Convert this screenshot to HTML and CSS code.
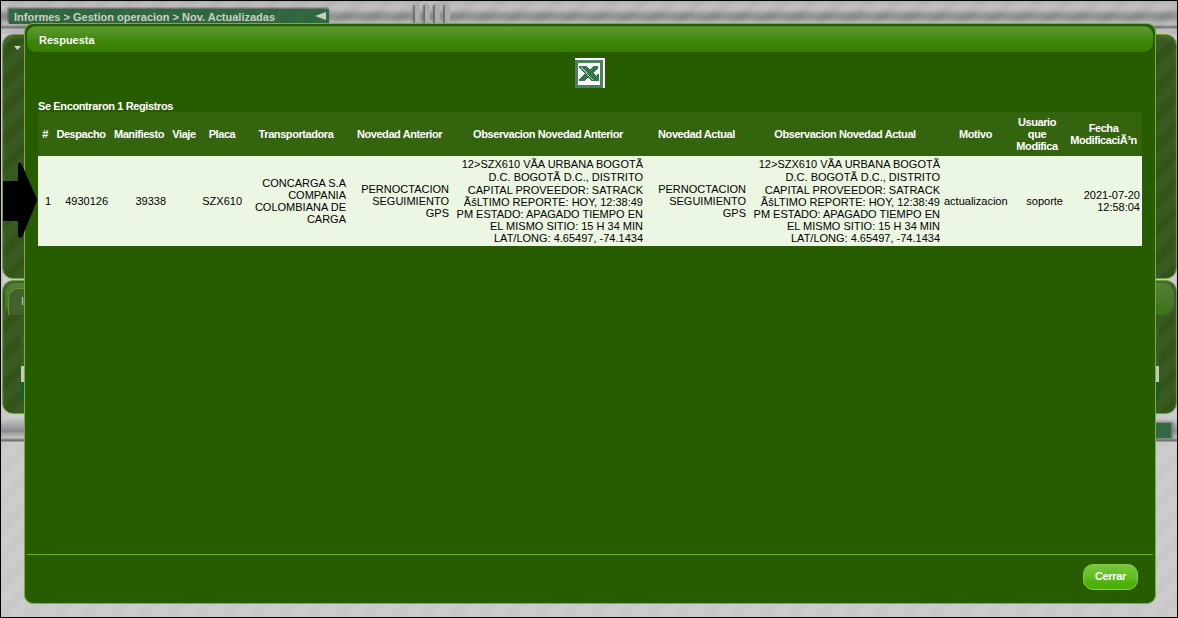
FILE: index.html
```html
<!DOCTYPE html>
<html lang="es">
<head>
<meta charset="utf-8">
<title>Nov. Actualizadas</title>
<link rel="stylesheet" href="styles.css">
</head>
<body>
<div class="page">
  <header class="topbar">
    <div class="crumbs"><span>Informes &gt; Gestion operacion &gt; Nov. Actualizadas</span>
      <svg class="back" width="11" height="8" viewBox="0 0 11 8"><path d="M0 4L11 0V8Z" fill="#c8cbc8"/></svg></div>
    <div class="pipe short"></div>
    <div class="ribs"><i></i><i></i><i></i><i></i></div>
    <div class="pipe"></div>
  </header>
  <main class="panels">
    <section class="panel filters"><svg width="7" height="4" viewBox="0 0 7 4"><path d="M0 0H7L3.500 4Z" fill="#d5d9d2"/></svg></section>
    <section class="panel results">
      <div class="tabbar"><div class="tab">I</div></div>
      <div class="rows"><div class="r1"></div><div class="r2"></div><div class="r3"></div></div>
    </section>
  </main>
  <footer class="bottombar"><div class="status"></div></footer>
</div>

<div class="dialog">
  <div class="dialog-title">Respuesta</div>
  <div class="dialog-body">
    <div class="export">
      <svg width="30" height="30" viewBox="0 0 30 30" shape-rendering="crispEdges">
        <defs><pattern id="dots" width="2" height="2" patternUnits="userSpaceOnUse"><rect width="2" height="2" fill="#2f7048"/><path d="M0 0h1v1H0zM1 1h1v1H1z" fill="#699078"/></pattern>
        <pattern id="dark" width="2" height="2" patternUnits="userSpaceOnUse"><rect width="2" height="2" fill="#226a3d"/><path d="M0 0h1v1H0zM1 1h1v1H1z" fill="#46845c"/></pattern></defs>
        <rect width="30" height="30" fill="#fff"/>
        <rect y="2" width="28" height="28" fill="url(#dots)"/>
        <rect x="3" y="5" width="22" height="22" fill="#fff"/>
        <path d="M4 8H12L15 12L18 8H23V10L18 15L21 18H22V16H24V23H16L13 19L9 23H4V21L10 15L4 10Z" fill="url(#dark)"/>
        <path d="M6 9L18 22" stroke="#e4efe7" stroke-width=".8" fill="none"/>
      </svg>
    </div>
    <div class="count">Se Encontraron 1 Registros</div>
    <table class="grid">
      <colgroup><col class="w14"><col class="w58"><col class="w58"><col class="w32"><col class="w44"><col class="w104"><col class="w103"><col class="w194"><col class="w103"><col class="w194"><col class="w67"><col class="w56"><col class="w77"></colgroup>
      <thead><tr><th>#</th><th>Despacho</th><th>Manifiesto</th><th>Viaje</th><th>Placa</th><th>Transportadora</th><th>Novedad Anterior</th><th>Observacion Novedad Anterior</th><th>Novedad Actual</th><th>Observacion Novedad Actual</th><th>Motivo</th><th>Usuario<br>que<br>Modifica</th><th>Fecha<br>ModificaciÃ³n</th></tr></thead>
      <tbody><tr>
        <td class="num">1</td><td>4930126</td><td>39338</td><td></td><td>SZX610</td>
        <td>CONCARGA S.A<br>COMPANIA<br>COLOMBIANA DE<br>CARGA</td>
        <td>PERNOCTACION<br>SEGUIMIENTO<br>GPS</td>
        <td><span class="tall">12&gt;SZX610 VÃA URBANA BOGOTÃ</span><span class="tall">D.C. BOGOTÃ D.C., DISTRITO</span><span>CAPITAL PROVEEDOR: SATRACK</span><span>ÃšLTIMO REPORTE: HOY, 12:38:49</span><span>PM ESTADO: APAGADO TIEMPO EN</span><span>EL MISMO SITIO: 15 H 34 MIN</span><span>LAT/LONG: 4.65497, -74.1434</span></td>
        <td>PERNOCTACION<br>SEGUIMIENTO<br>GPS</td>
        <td><span class="tall">12&gt;SZX610 VÃA URBANA BOGOTÃ</span><span class="tall">D.C. BOGOTÃ D.C., DISTRITO</span><span>CAPITAL PROVEEDOR: SATRACK</span><span>ÃšLTIMO REPORTE: HOY, 12:38:49</span><span>PM ESTADO: APAGADO TIEMPO EN</span><span>EL MISMO SITIO: 15 H 34 MIN</span><span>LAT/LONG: 4.65497, -74.1434</span></td>
        <td>actualizacion</td><td>soporte</td><td>2021-07-20<br>12:58:04</td>
      </tr></tbody>
    </table>
  </div>
  <div class="dialog-actions"><button class="close">Cerrar</button></div>
</div>

<svg class="pointer" width="35" height="77" viewBox="0 0 35 77"><path d="M0 19H15V2Q17-1 19 3L34 37V39L19 75Q17 77 15 74V59H0Z" fill="#000"/></svg>
</body>
</html>
```
FILE: styles.css
```css
* { box-sizing: border-box; }
body {
  margin: 0;
  font: 11px/12px "Liberation Sans", Arial, sans-serif;
}
.page {
  width: 1178px;
  height: 618px;
  border: 1px solid #000;
  display: flex;
  flex-direction: column;
  overflow: hidden;
  background: repeating-linear-gradient(135deg, #cccccc 0, #cccccc 8px, #c8c8c8 11px, #c8c8c8 17px, #cccccc 20px);
}
.topbar {
  height: 33px;
  padding: 8px 0 0 8px;
  display: flex;
  background:
    repeating-linear-gradient(135deg, rgba(255,255,255,.05) 0 8px, rgba(0,0,0,.02) 11px 17px, rgba(255,255,255,.05) 20px),
    linear-gradient(#b4b1b4 0, #bdbdbd 5px, #bbb 8px, #a0a3a3 11px, #898c8c 15px, #939696 18px, #b7b7b7 22px, #b2b2b2 24px, #707272 26px, #777 27px, #bbbbbd 28px, #bbbbbd 33px);
}
.crumbs {
  width: 320px;
  height: 15px;
  padding: 2px 3px 0 5px;
  display: flex;
  justify-content: space-between;
  background: repeating-linear-gradient(135deg, #33693f 0 8px, #306541 8px 16px);
  box-shadow: -1px -1px 2px #555;
  color: #cdd0cb;
  font-weight: bold;
}
.back { margin-top: 1px; }
.pipe { flex: 1; }
.pipe.short { flex: none; width: 86px; }
.ribs { display: flex; margin-top: -4px; gap: 5px; height: 20px; }
.ribs i { width: 5px; background: #acaeae; box-shadow: -2px 0 2px #686b6b; }
.panels { display: flex; flex-direction: column; gap: 1px; padding-left: 1px; }
.panel {
  border: 1px solid #6ea03b;
  border-radius: 11px;
  background: repeating-linear-gradient(135deg, #395a22 0, #395a22 8px, #335319 11px, #335319 17px, #395a22 20px);
  box-shadow: inset 0 3px 4px rgba(110,140,90,.35);
}
.filters { height: 245px; padding: 11px 0 0 11px; line-height: 0; }
.results { height: 134px; padding: 2px 2px 0; }
.tabbar {
  height: 32px;
  padding: 5px 0 0 3px;
  border-radius: 11px;
  background: linear-gradient(#567f36, #3c731a);
}
.tab {
  width: 300px;
  height: 27px;
  padding: 6px 0 0 12px;
  border: 1px solid #61922f;
  border-width: 1px 0 0 1px;
  border-radius: 10px 0 0;
  background: #41622a;
  color: #c9d1d8;
}
.rows { margin: 11px 15px 0 16px; }
.r1 { height: 40px; background: #3a5d27; }
.r2 { height: 16px; background: #c4c9bf; }
.r3 { height: 18px; background: #166029; }
.bottombar {
  height: 28px;
  padding: 9px 6px 0;
  display: flex;
  justify-content: flex-end;
  background: linear-gradient(transparent 4px, #c6c6c6 5px, #a8aaaa 11px, #8b8e8e 17px, #bcbcbc 23px, #bbb 24px, #747474 26px, #747474 27px, transparent 28px);
}
.status { width: 40px; height: 15px; background: #336943; box-shadow: 1px 0 2px 1px #777; }

.dialog {
  position: absolute;
  left: 24px;
  top: 23px;
  width: 1132px;
  height: 581px;
  padding: 2px;
  display: flex;
  flex-direction: column;
  border: 1px solid #72b42d;
  border-radius: 9px;
  background: #285c00;
  color: #fff;
}
.dialog-title {
  height: 26px;
  padding: 8px 12px 0;
  border-radius: 9px;
  background: linear-gradient(#357607 0, #5b992c 1px, #529225 7px, #3d8407 15px, #398004 25px, #357607 26px);
  font-weight: bold;
}
.dialog-body { flex: 1; padding: 6px 11px 0; }
.export { height: 42px; padding-left: 537px; }
.count { height: 12px; font-weight: bold; letter-spacing: -.38px; }
.grid { width: 1104px; table-layout: fixed; border-collapse: collapse; }
.grid th, .grid td { padding: 2px; white-space: nowrap; }
.grid th { height: 44px; padding: 2px 0; background: #35640f; text-align: center; vertical-align: middle; letter-spacing: -.42px; }
.grid td { height: 90px; background: #ebf7e2; color: #000; text-align: right; vertical-align: middle; }
.grid .num { padding-right: 1px; }
.grid span { display: block; }
.grid .tall { line-height: 13px; }
.w14 { width: 14px; } .w32 { width: 32px; } .w44 { width: 44px; } .w56 { width: 56px; }
.w58 { width: 58px; } .w67 { width: 67px; } .w77 { width: 77px; }
.w103 { width: 103px; } .w104 { width: 104px; } .w194 { width: 194px; }
.dialog-actions {
  height: 47px;
  padding: 9px 15px 0;
  border-top: 1px solid #69b022;
  display: flex;
  justify-content: flex-end;
}
.close {
  width: 55px;
  height: 26px;
  padding: 0 0 2px;
  border: 1px solid #83cf3e;
  border-radius: 10px;
  background: linear-gradient(#78c53d, #62bd20 50%, #4cb10a 75%, #4bae08);
  color: #fff;
  font: bold 11px/12px "Liberation Sans", Arial, sans-serif;
  letter-spacing: -.3px;
}
.pointer { position: absolute; left: 3px; top: 162px; }
```
